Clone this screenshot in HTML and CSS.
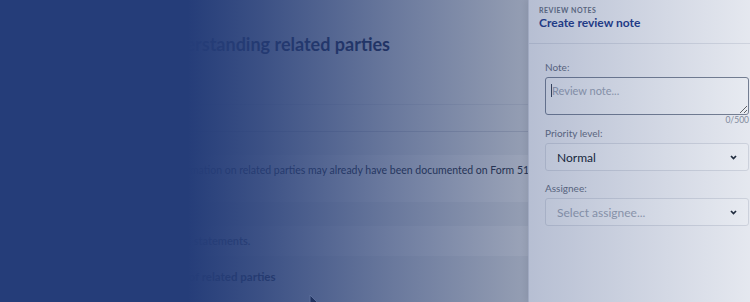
FILE: index.html
```html
<!DOCTYPE html>
<html lang="en">
<head>
    <meta charset="UTF-8">
    <meta name="viewport" content="width=device-width, initial-scale=1.0">
    <title>Understanding related parties</title>
    <link rel="stylesheet" href="styles.css">
</head>
<body>
    <div class="screen">
        <!-- page content -->
        <div class="main">
            <h1 class="page-title">Understanding related parties</h1>
            <div class="tab-strip"></div>

            <div class="rows">
                <div class="row row-tall">
                    <p class="row-text row-note">Information on related parties may already have been documented on Form 510.</p>
                </div>
                <div class="row row-short">
                    <p class="row-text row-strong">Financial statements.</p>
                </div>
                <h3 class="section-title">Identity of related parties</h3>
            </div>
        </div>

        <div class="backdrop"></div>

        <svg class="pointer" width="12" height="18" viewBox="0 0 12 18">
            <path d="M1 1 L1 15 L4.5 11.5 L7 17 L9 16 L6.5 10.8 L11 10.8 Z" fill="#111" stroke="#fff" stroke-width="1"/>
        </svg>

        <!-- review note drawer -->
        <aside class="drawer">
            <div class="drawer-header">
                <div class="drawer-kicker">Review notes</div>
                <div class="drawer-title">Create review note</div>
            </div>
            <div class="drawer-body">
                <label class="field-label">Note:</label>
                <div class="note-box">
                    <textarea class="note-input" placeholder="Review note..."></textarea>
                    <span class="caret"></span>
                </div>
                <div class="counter">0/500</div>

                <label class="field-label">Priority level:</label>
                <div class="select-box">
                    <span class="select-value">Normal</span>
                    <svg class="chevron" width="7" height="5" viewBox="0 0 7 5"><path d="M1 1 L3.5 3.6 L6 1" fill="none" stroke="#1f2937" stroke-width="1.7"/></svg>
                </div>

                <label class="field-label label-gap">Assignee:</label>
                <div class="select-box">
                    <span class="select-value placeholder">Select assignee...</span>
                    <svg class="chevron" width="7" height="5" viewBox="0 0 7 5"><path d="M1 1 L3.5 3.6 L6 1" fill="none" stroke="#1f2937" stroke-width="1.7"/></svg>
                </div>
            </div>
        </aside>

        <div class="fade"></div>
    </div>
</body>
</html>
```

FILE: styles.css
```css
* {
    margin: 0;
    padding: 0;
    box-sizing: border-box;
}

body {
    font-family: Lato, "Liberation Sans", Arial, sans-serif;
    background: #f4f5f7;
    overflow: hidden;
}

.screen {
    position: relative;
    width: 750px;
    height: 302px;
    overflow: hidden;
}

/* 页面主体 */
.main {
    width: 528px;
    height: 100%;
    overflow: hidden;
    padding: 32px 0 0 152px;
    white-space: nowrap;
}

.page-title {
    font-size: 18px;
    line-height: 24px;
    font-weight: 700;
    color: #1e2a4f;
}

.tab-strip {
    margin: 48px 0 0 -152px;
    height: 28px;
    border-top: 1px solid #e3e5ea;
    border-bottom: 1px solid #d5d8df;
}

.rows {
    margin: 23px 0 0 -152px;
}

.row {
    background: #fff;
    padding-left: 148px;
}

.row-tall {
    height: 47px;
    padding-top: 7px;
}

.row-short {
    height: 30px;
    margin-top: 24px;
    padding-top: 7px;
}

.row-text {
    font-size: 11px;
    line-height: 16px;
    color: #2b3140;
}

.row-note {
    font-size: 10.5px;
    padding-left: 20px;
}

.row-strong {
    font-weight: 600;
    color: #4b5263;
}

.section-title {
    margin-top: 13px;
    padding-left: 146px;
    font-size: 11.5px;
    line-height: 16px;
    font-weight: 700;
    color: #2b3140;
}

.backdrop {
    position: absolute;
    inset: 0;
    background: rgba(17, 24, 39, 0.2);
}

.pointer {
    position: absolute;
    left: 309px;
    top: 294px;
}

/* 侧边抽屉 */
.drawer {
    position: absolute;
    top: 0;
    right: 0;
    width: 222px;
    height: 100%;
    background: #f8f9fb;
    border-left: 1px solid #d9dce3;
    box-shadow: -2px 0 6px rgba(0,0,0,0.08);
}

.drawer-header {
    height: 44px;
    padding: 6px 10px 0;
    border-bottom: 1px solid #dfe2e8;
}

.drawer-kicker {
    font-size: 7px;
    line-height: 9px;
    font-weight: 700;
    letter-spacing: 0.5px;
    text-transform: uppercase;
    color: #6b7280;
}

.drawer-title {
    font-size: 12px;
    line-height: 16px;
    font-weight: 700;
    color: #1e3a8a;
}

.drawer-body {
    padding: 17px 1px 0 16px;
}

.field-label {
    display: block;
    font-size: 10px;
    line-height: 12px;
    color: #6b7280;
    margin-bottom: 4px;
}

.label-gap {
    margin-top: 11px;
}

.note-box {
    position: relative;
}

.note-input {
    display: block;
    width: 100%;
    height: 38px;
    padding: 6px 6px;
    border: 1px solid #7b8494;
    border-radius: 3px;
    background: #fbfcfd;
    font-family: inherit;
    font-size: 11px;
    color: #111827;
    resize: vertical;
    outline: none;
}

.note-input::placeholder {
    color: #a3aab6;
}

.caret {
    position: absolute;
    left: 6px;
    top: 7px;
    width: 1px;
    height: 13px;
    background: #374151;
}

.counter {
    text-align: right;
    font-size: 8.5px;
    line-height: 10px;
    color: #8b93a1;
    margin-bottom: 2px;
}

.select-box {
    display: flex;
    align-items: center;
    justify-content: space-between;
    height: 28px;
    padding: 0 11px 0 11px;
    border: 1px solid #dde0e6;
    border-radius: 3px;
    background: #fbfcfd;
}

.select-value {
    font-size: 12px;
    color: #111827;
}

.select-value.placeholder {
    color: #a3aab6;
}

.chevron {
    margin-top: 1px;
}

/* 渐变遮罩 */
.fade {
    position: absolute;
    inset: 0;
    pointer-events: none;
    background: linear-gradient(to right,
        rgba(37, 61, 121, 1) 0%,
        rgba(37, 61, 121, 1) 25%,
        rgba(37, 61, 121, 0.86) 35%,
        rgba(37, 61, 121, 0.58) 52%,
        rgba(37, 61, 121, 0.32) 69%,
        rgba(37, 61, 121, 0.09) 100%);
}
```
